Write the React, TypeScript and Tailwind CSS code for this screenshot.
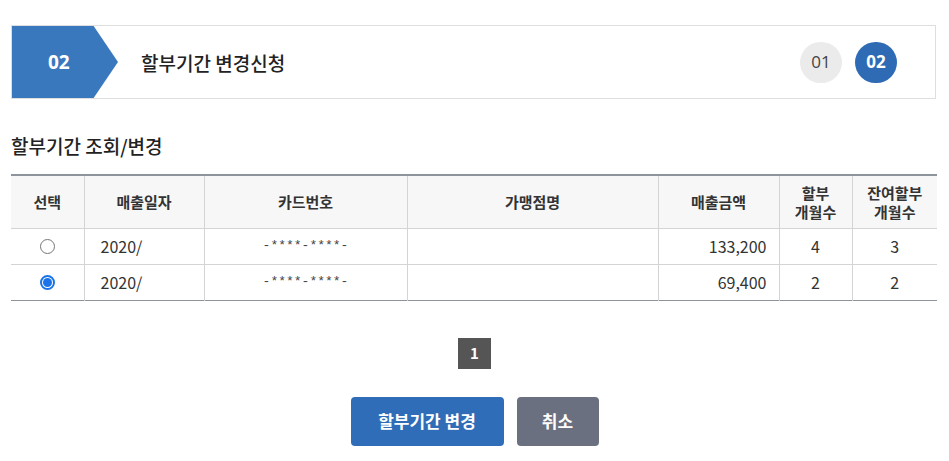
import React from 'react';

interface Row {
  date: string;
  card: string;
  store: string;
  amount: string;
  months: number;
  remain: number;
  checked: boolean;
}

const rows: Row[] = [
  { date: '2020/', card: '-****-****-', store: '', amount: '133,200', months: 4, remain: 3, checked: false },
  { date: '2020/', card: '-****-****-', store: '', amount: '69,400', months: 2, remain: 2, checked: true },
];

const Radio = ({ checked }: { checked: boolean }) =>
  checked ? (
    <span className="flex w-[15px] h-[15px] rounded-full border-2 border-[#1a73e8] items-center justify-center bg-white">
      <span className="w-[9px] h-[9px] rounded-full bg-[#1a73e8]" />
    </span>
  ) : (
    <span className="block w-[15px] h-[15px] rounded-full border border-[#767676] bg-white" />
  );

const App = () => {
  return (
    <div className="w-[949px] h-[461px] bg-white px-[11px] pt-[25px] text-[#222] font-['Noto_Sans_CJK_KR','Noto_Sans',sans-serif]">
      {/* Step header */}
      <div className="flex items-center h-[74px] w-[925px] border border-[#dedede]">
        <div className="w-[106px] h-[72px] bg-[#3a78be] [clip-path:polygon(0_0,77%_0,100%_50%,77%_100%,0_100%)] flex items-center pl-[36px]">
          <span className="text-white text-[19px] font-bold leading-none font-['Open_Sans',sans-serif]">02</span>
        </div>
        <h1 className="ml-[23px] text-[19px] font-medium leading-none">할부기간 변경신청</h1>
        <div className="ml-auto mr-[38px] flex gap-[13px]">
          <span className="w-[42px] h-[41px] rounded-full bg-[#ebebeb] flex items-center justify-center text-[17px] text-[#444] font-['Open_Sans',sans-serif]">
            01
          </span>
          <span className="w-[42px] h-[41px] rounded-full bg-[#2f6ab4] flex items-center justify-center text-[17px] text-white font-bold font-['Open_Sans',sans-serif]">
            02
          </span>
        </div>
      </div>

      {/* Section title */}
      <h2 className="mt-[37px] text-[19px] font-medium leading-none">할부기간 조회/변경</h2>

      {/* Table */}
      <table className="mt-[19px] w-[926px] border-collapse table-fixed text-[15px] leading-[20px]">
        <colgroup>
          <col className="w-[73px]" />
          <col className="w-[120px]" />
          <col className="w-[203px]" />
          <col className="w-[251px]" />
          <col className="w-[121px]" />
          <col className="w-[73px]" />
          <col className="w-[85px]" />
        </colgroup>
        <thead>
          <tr className="h-[53px] bg-[#f7f7f7] border-t-2 border-[#8e949c]">
            {['선택', '매출일자', '카드번호', '가맹점명', '매출금액'].map((h, i) => (
              <th key={h} className={`font-semibold text-[#333] border-b border-[#d4d4d4] ${i > 0 ? 'border-l' : ''}`}>
                {h}
              </th>
            ))}
            <th className="font-semibold text-[#333] border-b border-l border-[#d4d4d4] leading-[19px]">
              할부
              <br />
              개월수
            </th>
            <th className="font-semibold text-[#333] border-b border-l border-[#d4d4d4] leading-[19px]">
              잔여할부
              <br />
              개월수
            </th>
          </tr>
        </thead>
        <tbody className="text-[16px] text-[#333]">
          {rows.map((r, i) => (
            <tr key={i} className={`h-[36px] ${i === rows.length - 1 ? 'border-b border-[#8e949c]' : 'border-b border-[#d4d4d4]'}`}>
              <td className="align-middle">
                <div className="flex justify-center">
                  <Radio checked={r.checked} />
                </div>
              </td>
              <td className="border-l border-[#d4d4d4] pl-[16px]">{r.date}</td>
              <td className="border-l border-[#d4d4d4] text-center text-[13px] text-[#444] font-['Liberation_Mono',monospace]">
                {r.card}
              </td>
              <td className="border-l border-[#d4d4d4]">{r.store}</td>
              <td className="border-l border-[#d4d4d4] text-right pr-[12px]">{r.amount}</td>
              <td className="border-l border-[#d4d4d4] text-center">{r.months}</td>
              <td className="border-l border-[#d4d4d4] text-center">{r.remain}</td>
            </tr>
          ))}
        </tbody>
      </table>

      {/* Pagination */}
      <div className="mt-[37px] flex justify-center">
        <span className="w-[33px] h-[31px] bg-[#555] text-white text-[15px] font-bold flex items-center justify-center">
          1
        </span>
      </div>

      {/* Buttons */}
      <div className="mt-[28px] flex justify-center gap-[13px]">
        <button className="w-[153px] h-[49px] rounded-[4px] bg-[#2f6db8] text-white text-[17px] font-bold">
          할부기간 변경
        </button>
        <button className="w-[82px] h-[49px] rounded-[4px] bg-[#6b7080] text-white text-[17px] font-bold">
          취소
        </button>
      </div>
    </div>
  );
};

export default App;
